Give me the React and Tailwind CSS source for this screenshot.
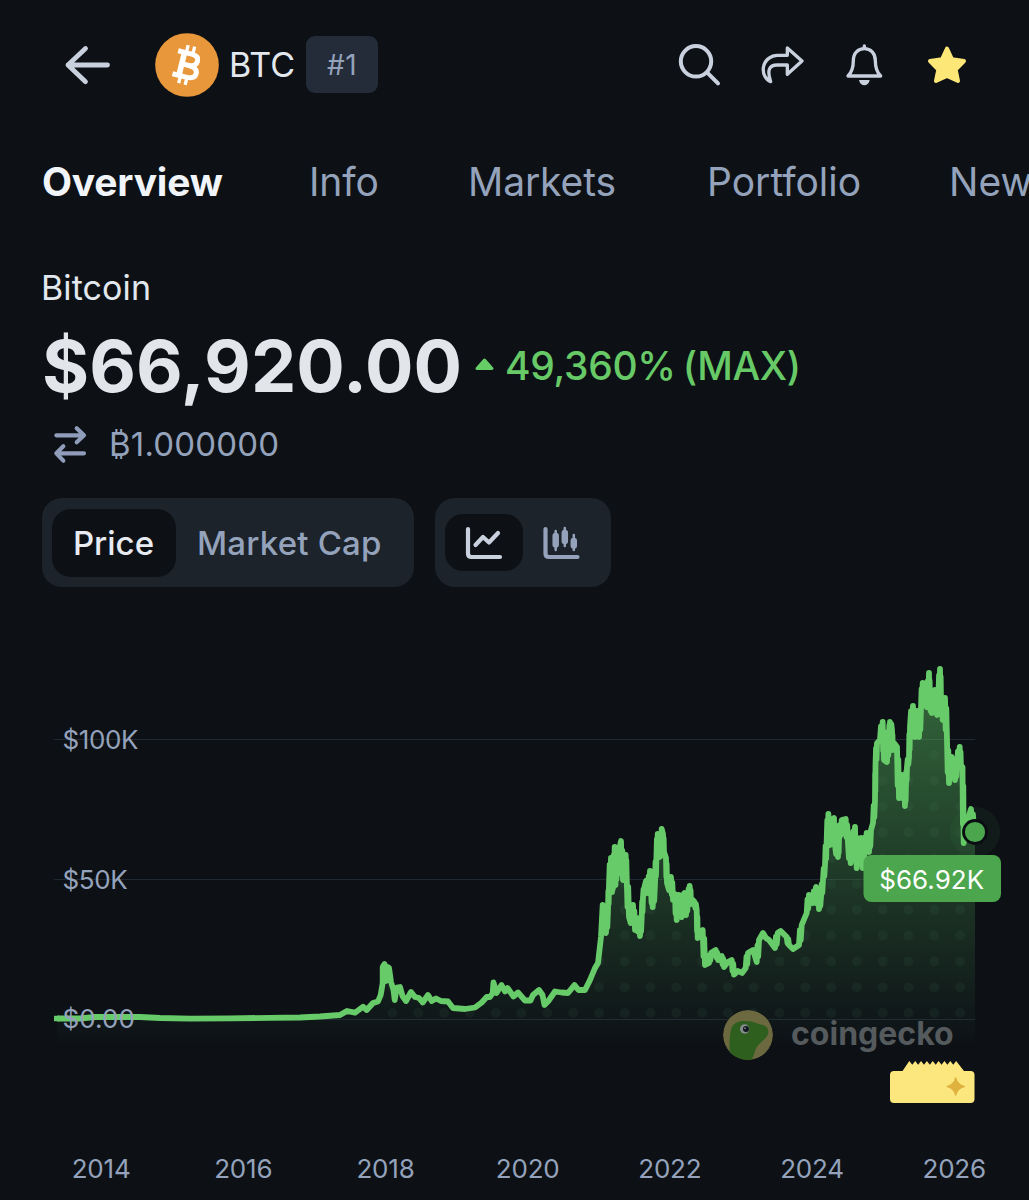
import React from "react";

const SAMPLES = [
  [57,1018.5],[80,1018.5],[95,1017],[120,1017],[140,1017],[160,1018],[190,1018.6],[230,1018.4],[270,1017.8],[300,1017.5],[320,1016.5],[340,1015],[347,1011],[355,1012.7],[363,1006.7],[366.7,1010],[373,1003],[378,1001.5],[380.7,995],[382.7,983],[382.7,967],[384.5,964],[386,981],[387.5,967],[389,968],[391,982],[393.5,990],[394.7,1000],[396.7,987.5],[400,987],[402.5,996],[406,1001],[411,992],[415,997],[419,998],[422.7,1002.5],[428,995],[431.7,1001],[436,998.5],[441,1001],[448,1001.5],[453,1008],[465,1009],[475,1007.5],[481.7,1002.5],[486.7,997],[490,997],[492.7,993],[493.5,982.5],[496.5,993],[501.5,985],[505,991.5],[507.5,988],[513.5,996.5],[518,992.5],[525,1000.5],[530.5,1000.5],[533,995],[539,990],[542.5,995],[544.5,1005],[548,1001.5],[555,991.5],[561.5,992.5],[568,993],[574.5,985],[578.5,990],
  [585,990],[590,980],[595,968],[598,963],[601,937],[602.7,905],[604,928],[606,933],[608,910],[609,885],[611,858],[612,892],[613.3,880],[614.7,847],[615.5,885],[617,862],[618,874],[619.5,848],[621,841],[623,880],[625.7,855],[626.7,877],[629,917],[630.7,923],[633,905],[635,930],[637,918],[640,936],[641.7,917],[643,897],[644.5,887],[646,881],[648,893],[650,871],[651,890],[652.7,907],[655,883],[656.5,855],[657.7,834],[659,852],[660,857],[661.7,829],[663,834],[664,852],[666,858],[667,883],[669,890],[671,877],[673,900],[675,894],[676.7,920],[678.7,895],[680,915],[681.7,917],[683,895],[684.5,893],[686,915],[688,898],[689.7,886],[691,904],[692.7,900],[694.5,902],[696.7,910],[697.7,938],[702.7,930],[705,965],[709,963],[711,953],[715.7,950],[718,960],[721.7,956],[724,967],[727.7,962],[731.7,960],[734,974.5],[738,971],[742,973],[745.7,968],[748,953],[753,950],[756.7,962],[759,940],[763,933],[766,938],[769,940],[775,948],[777.7,933],[780.7,931],[786.7,937],[789,945],[793,949],[799,945],[801.7,925],[806.7,913],[809,895],[812.7,903],[816,887],[819,909],[821,897],[823,880],[825,865],[826.7,840],[828.4,814],[830,845],[832,820],[834,818],[835,845],[838,857],[839,840],[841.7,820],[845.7,819],[848,843],[850.7,863],[852.5,845],[855,827],[856.7,868],[858.5,850],[861,838],[862.7,868],[864.5,850],[866.7,833],[869,852],[871,830],[873,823],[875,800],[875.5,765],[877,743],[880,740],[882.7,722],[884,760],[887,762],[889,735],[890,722],[892,730],[892.7,750],[894,743],[897,747],[899,798],[902,775],[905,806],[906,785],[907,767],[909,757],[910,727],[913,706],[915,737],[917,711],[919,737],[921,708],[922.7,683],[924,700],[926.7,707],[929,673],[930,705],[931.7,713],[935,690],[937,715],[938.5,695],[940,669],[941,700],[942.7,720],[945,698],[947,740],[949,783],[951.7,757],[955,780],[957,765],[959.7,747],[961,768],[962.5,767],[963.7,843],[967,823],[971,809],[974,830],
];

// Adds intraday back-and-forth to steep moves in the volatile years.
const LINE = SAMPLES.flatMap(([x, y], i) => {
  const next = SAMPLES[i + 1];
  if (!next || x < 606) return [[x, y]];
  const dx = next[0] - x;
  const dy = next[1] - y;
  if (Math.abs(dy) < 8 || dx > 3.5) return [[x, y]];
  return [[x, y], [x + 0.35 * dx, y + 0.75 * dy], [x + 0.65 * dx, y + 0.25 * dy]];
});
const points = LINE.map((p) => p.join(",")).join(" ");
const area = `M57,1045 L${LINE.map((p) => p.join(",")).join(" L")} L975,832 L975,1045 Z`;

const dots = [];
for (let x = 392.5; x < 975; x += 25.8) for (let y = 755; y < 1020; y += 25.8) dots.push([x, y]);

const teeth = Array.from({ length: 8 }, (_, i) => `L${912.3 + i * 5.85},1064.7 L${915.2 + i * 5.85},1061`).join(" ");

const line = { fill: "none", stroke: "currentColor", strokeLinecap: "round", strokeLinejoin: "round" };

function Header() {
  return (
    <header className="flex h-[130px] shrink-0 items-center pl-[62px] pr-[60px] text-[#c9d1de]">
      <svg className="h-[50px] w-[50px]" viewBox="62 40 50 50" {...line} strokeWidth="4.8">
        <path d="M107.500 65H68M85.500 48.500L68 65l17.500 16.700" />
      </svg>
      <svg className="ml-[42px] h-[66px] w-[66px]" viewBox="-99 -99 198 198">
        <circle r="95.500" fill="#e8973b" />
        <g transform="rotate(14)" fill="none" stroke="#ffffff" strokeWidth="15">
          <path d="M-36 -35H6C21 -35 28 -28 28 -18C28 -7 20 0 6 0H-14M6 0C24 0 33 8 33 18C33 30 23 36 6 36H-36" strokeLinejoin="round" />
          <path d="M-16 -35V36" strokeWidth="17" />
          <path d="M-11 -38V-59M9 -38V-59M-11 38V59M9 38V59" strokeWidth="10" />
        </g>
      </svg>
      <span className="ml-[9px] text-[34px] leading-none text-[#e3e8ee]">BTC</span>
      <span className="-mt-[1px] ml-[11px] flex h-[57px] w-[72px] items-center justify-center rounded-[9px] bg-[#232c38] text-[28px] leading-none tracking-[0.5px] text-[#94a3bb]">#1</span>
      <div className="ml-auto flex items-center gap-[33px]">
        <svg className="h-[50px] w-[50px]" viewBox="673 40 50 50" {...line} strokeWidth="4">
          <circle cx="696" cy="61.300" r="15.200" />
          <path d="M707.500 72.800L718 83.300" />
        </svg>
        <svg className="h-[50px] w-[50px]" viewBox="939 175 150 150" {...line} strokeWidth="10">
          <g transform="translate(651 115)">
            <path d="M382 84L426 123L382 163V135H352C326 135 321 152 332 185C318 180 308 163 310 143C314 118 335 106 352 106H382Z" />
          </g>
        </svg>
        <svg className="h-[50px] w-[50px]" viewBox="537 60 150 150" {...line} strokeWidth="10">
          <path d="M564 168C577 155 580 140 580 122C580 99 594 86 613 86C632 86 646 99 646 122C646 140 649 155 662 168Z" />
          <path d="M613 78v5" />
          <path d="M597 180H629C627 191 620 196 613 196C606 196 599 191 597 180Z" fill="currentColor" stroke="none" />
        </svg>
        <svg className="-mr-[3px] h-[50px] w-[50px] text-[#fde777]" viewBox="786 60 150 150">
          <path d="M861 86L876 118L912 123L887 149L894 183L861 168L828 183L835 149L810 123L846 118Z" fill="currentColor" stroke="currentColor" strokeWidth="12" strokeLinejoin="round" />
        </svg>
      </div>
    </header>
  );
}

function Tabs() {
  return (
    <nav className="flex h-[102px] shrink-0 items-center whitespace-nowrap text-[39px] leading-none text-[#94a3bb]">
      <span className="ml-[42px] w-[267px] shrink-0 font-bold tracking-[-0.2px] text-[#f1f5f9]">Overview</span>
      <span className="w-[159px] shrink-0 tracking-[-0.1px]">Info</span>
      <span className="w-[239px] shrink-0 tracking-[-0.1px]">Markets</span>
      <span className="w-[242px] shrink-0">Portfolio</span>
      <span className="shrink-0">News</span>
    </nav>
  );
}

function Summary() {
  return (
    <section className="flex shrink-0 flex-col pl-[40px]">
      <h1 className="mt-[31px] ml-[1px] text-[34px] leading-[50px] tracking-[0.1px] text-[#e3e8ee]">Bitcoin</h1>
      <div className="mt-[8px] flex h-[90px] items-center pl-[2px]">
        <span className="w-[432px] text-[72px] font-bold leading-none tracking-[0.1px] text-[#e2e5ea]">$66,920.00</span>
        <svg className="-mt-[4px] h-[14px] w-[22px]" viewBox="474 357 22 14">
          <path d="M484.500 360L492 368.500H477Z" fill="#67ce67" stroke="#67ce67" strokeWidth="3" strokeLinejoin="round" />
        </svg>
        <span className="-mt-[2px] ml-[9px] text-[39px] font-medium leading-none tracking-[-0.3px] text-[#67ca67] [word-spacing:-3px]">49,360% (MAX)</span>
      </div>
      <div className="mt-[11px] flex h-[44px] items-center text-[#8f9cba]">
        <svg className="-mt-[1px] ml-[10px] h-[40px] w-[40px]" viewBox="60 490 120 120" {...line} strokeWidth="12.500">
          <path d="M79 524H162M140 503L162 524L140 545M162 578H79M100 557L79 578L100 600" />
        </svg>
        <span className="ml-[19px] text-[33px] leading-none tracking-[0.2px] text-[#94a3bb]">₿1.000000</span>
      </div>
    </section>
  );
}

function Toggles() {
  return (
    <section className="mt-[32px] flex h-[89px] shrink-0 gap-[21px] pl-[42px] text-[33px] font-medium leading-none">
      <div className="flex w-[372px] items-center rounded-[20px] bg-[#1c232b] pl-[10px]">
        <button className="flex h-[68px] w-[124px] items-center justify-center rounded-[19px] bg-[#0d1116] pt-[2px] pr-[1px] text-[#e8ecf2]">Price</button>
        <button className="ml-[21px] whitespace-nowrap pt-[2px] tracking-[0.2px] text-[#94a3bb]">Market Cap</button>
      </div>
      <div className="flex w-[176px] items-center rounded-[20px] bg-[#1c232b] pl-[10px]">
        <button className="flex h-[57px] w-[78px] items-center justify-center rounded-[18px] bg-[#0d1116] text-[#c9d1de]">
          <svg className="h-[40px] w-[40px]" viewBox="464 523 40 40" {...line} strokeWidth="4.200">
            <path d="M468 529V553.500Q468 557 471.500 557H500M475.500 545L483 537L489 542.500L498 533" />
          </svg>
        </button>
        <button className="ml-[18px] text-[#94a3bb]">
          <svg className="h-[40px] w-[40px]" viewBox="541 523 40 40" {...line} strokeWidth="4.200">
            <path d="M545.500 529V553.500Q545.500 557 549 557H577.500" />
            <path d="M555.700 531V550M564.800 528V546M573.800 535V550" strokeWidth="2.500" />
            <path d="M555.700 536V544.500M564.800 533V541M573.800 541V545.500" strokeWidth="6.500" />
          </svg>
        </button>
      </div>
    </section>
  );
}

function Chart() {
  return (
    <svg className="mt-[13px] h-[520px] w-[1029px] shrink-0" viewBox="0 600 1029 520">
      <defs>
        <linearGradient id="fade" gradientUnits="userSpaceOnUse" x1="0" y1="669" x2="0" y2="1045">
          <stop offset="0" stopColor="#5fcb66" stopOpacity="0.47" />
          <stop offset="0.4" stopColor="#5fcb66" stopOpacity="0.29" />
          <stop offset="0.75" stopColor="#5fcb66" stopOpacity="0.12" />
          <stop offset="1" stopColor="#5fcb66" stopOpacity="0" />
        </linearGradient>
        <clipPath id="under"><path d={area} /></clipPath>
        <clipPath id="badge"><circle cx="748" cy="1035" r="25" /></clipPath>
      </defs>
      <path d="M54 739.500H975M54 879.500H975M54 1019.500H975" stroke="#202831" strokeWidth="1.200" />
      <path d={area} fill="url(#fade)" />
      <g clipPath="url(#under)" fill="#5f9c78" fillOpacity="0.075">
        {dots.map(([x, y]) => <circle key={`${x}-${y}`} cx={x} cy={y} r="5" />)}
      </g>
      <polyline points={points} fill="none" stroke="#67cb69" strokeWidth="5.800" strokeLinejoin="round" strokeLinecap="butt" />
      <path d="M54 1018.500H60" stroke="#67cb69" strokeWidth="5.400" />
      <g className="font-[Inter] text-[26px] tracking-[-0.4px]" fill="#94a3bb">
        <text x="62.500" y="748.500">$100K</text>
        <text x="62.500" y="888.500">$50K</text>
        <text className="tracking-[0.1px]" x="62.500" y="1028">$0.00</text>
      </g>
      <g clipPath="url(#badge)">
        <circle cx="748" cy="1035" r="25" fill="#6c683f" />
        <g transform="translate(700 990) scale(0.3333)">
          <path d="M86 215C92 185 84 150 94 115C101 98 120 91 140 94C160 92 170 102 188 105C201 107 206 118 205 130C202 144 186 153 175 165C162 180 164 198 152 215Z" fill="#2f5f1e" />
          <circle cx="134" cy="117" r="14" fill="#858a8c" />
          <circle cx="138" cy="117" r="9" fill="#10161b" />
          <circle cx="135" cy="115" r="3" fill="#73777a" />
        </g>
      </g>
      <text className="font-[Inter] text-[32px] font-bold" x="791" y="1044.500" fill="#555a5d">coingecko</text>
      <path d={`M894,1071 L902.500,1071 L909.300,1061 ${teeth} L964,1071 L970.500,1071 Q974.500,1071 974.500,1075 V1099 Q974.500,1103 970.500,1103 H894 Q890,1103 890,1099 V1075 Q890,1071 894,1071 Z`} fill="#fce77e" />
      <path d="M955.700 1077.500Q957.500 1084.700 964.700 1086.500Q957.500 1088.300 955.700 1095.500Q953.900 1088.300 946.700 1086.500Q953.900 1084.700 955.700 1077.500Z" fill="#dfb23f" stroke="#dfb23f" strokeWidth="1" />
      <circle cx="975" cy="832" r="25" fill="#4caf50" fillOpacity="0.07" />
      <circle cx="975" cy="832" r="11.500" fill="#4ca64d" stroke="#0a0e12" strokeWidth="2.800" />
      <rect x="863.500" y="855" width="137.500" height="47" rx="8" fill="#4ca64d" />
      <text className="font-[Inter] text-[26px]" x="879.300" y="888.500" fill="#ffffff">$66.92K</text>
    </svg>
  );
}

export default function App() {
  return (
    <main className="flex h-[1200px] w-[1029px] flex-col overflow-hidden bg-[#0d1116] font-[Inter,sans-serif]">
      <Header />
      <Tabs />
      <Summary />
      <Toggles />
      <Chart />
      <div className="mt-[34px] ml-[30px] flex shrink-0 text-[26px] leading-[30px] tracking-[-0.2px] text-[#94a3bb]">
        {["2014", "2016", "2018", "2020", "2022", "2024", "2026"].map((y) => (
          <span key={y} className="w-[142.2px] shrink-0 text-center">{y}</span>
        ))}
      </div>
    </main>
  );
}
